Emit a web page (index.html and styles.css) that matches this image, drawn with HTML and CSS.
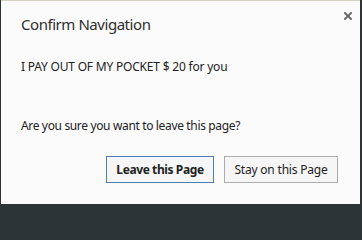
FILE: index.html
```html
<!DOCTYPE html>
<html>
<head>
<meta charset="utf-8">
<link rel="stylesheet" href="styles.css">
</head>
<body>
<div class="dialog">
  <div class="header">
    <div class="title">Confirm Navigation</div>
    <button class="close" aria-label="Close">
      <svg width="8" height="8" viewBox="0 0 8 8"><path d="M1 1 L7 7 M7 1 L1 7" stroke="#6b6b6b" stroke-width="2" stroke-linecap="square"/></svg>
    </button>
  </div>
  <p class="msg">I PAY OUT OF MY POCKET $ 20 for you</p>
  <p class="question">Are you sure you want to leave this page?</p>
  <div class="actions">
    <button class="btn primary">Leave this Page</button>
    <button class="btn">Stay on this Page</button>
  </div>
</div>
</body>
</html>
```
FILE: styles.css
```css
html, body {
  margin: 0;
  padding: 0;
  height: 208px;
  overflow: hidden;
}
body {
  width: 362px;
  background: #2c3436;
  font-family: "Noto Sans", "Open Sans", sans-serif;
  color: #222;
}
.dialog {
  box-sizing: border-box;
  width: 359px;
  height: 204px;
  margin-left: 1px;
  background: #fbfbfb;
  border-top: 1px solid #d6d2c2;
  display: flex;
  flex-direction: column;
  padding: 0 0 0 20px;
}
.header {
  display: flex;
  justify-content: space-between;
  align-items: flex-start;
  height: 40px;
}
.title {
  font-size: 15px;
  letter-spacing: -0.45px;
  color: #2e2e2e;
  margin-top: 13px;
  line-height: 20px;
}
.close {
  border: 0;
  background: transparent;
  padding: 0;
  margin: 11px 8px 0 0;
  width: 8px;
  height: 8px;
  display: flex;
}
.msg {
  margin: 18px 0 0;
  font-size: 12px;
  letter-spacing: -0.2px;
  line-height: 16px;
  white-space: nowrap;
}
.question {
  margin: 43px 0 0;
  font-size: 12px;
  letter-spacing: -0.35px;
  line-height: 16px;
  white-space: nowrap;
}
.actions {
  display: flex;
  justify-content: flex-end;
  gap: 10px;
  margin: 22px 22px 0 0;
}
.btn {
  font-family: inherit;
  font-size: 12px;
  letter-spacing: -0.2px;
  height: 27px;
  box-sizing: border-box;
  background: #f6f6f6;
  border: 1px solid #acacac;
  color: #222;
  padding: 0;
  width: 114px;
  white-space: nowrap;
}
.btn.primary {
  border-color: #4d7fb2;
  font-weight: bold;
  letter-spacing: -0.4px;
  width: 108px;
}
```
